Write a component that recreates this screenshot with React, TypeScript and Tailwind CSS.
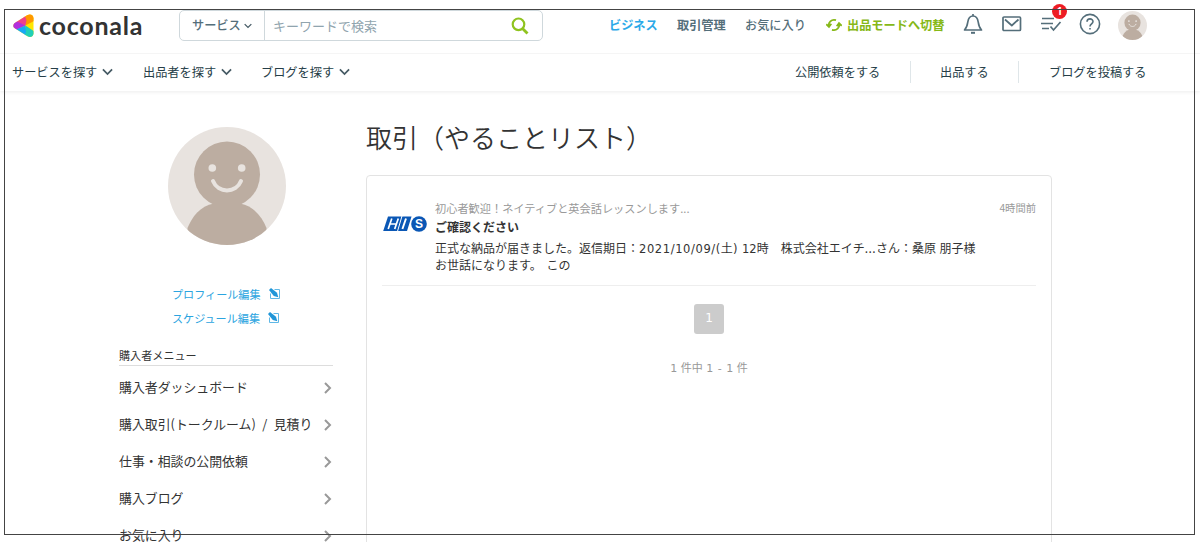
import React from 'react';

interface TextProps {
  children: React.ReactNode;
  className?: string;
}

interface IconProps {
  className?: string;
}

const menuItems = [
  '購入者ダッシュボード',
  '購入取引(トークルーム) / 見積り',
  '仕事・相談の公開依頼',
  '購入ブログ',
  'お気に入り',
];

const LogoMark: React.FC = () => (
  <svg viewBox="0 0 22 24" className="h-6 w-[22px] shrink-0">
    <defs>
      <clipPath id="mark">
        <path d="M1.800 9L14.500 1C17.500 -.5 20.500 1 20.500 4.200V19.200C20.500 22.500 17.500 24 14.500 22.300L1.800 14.200C-.2 12.900 -.2 10.400 1.800 9Z" />
      </clipPath>
    </defs>
    <g clipPath="url(#mark)">
      <path d="M0 0H22V24H0Z" fill="#ffe600" />
      <path d="M12 -2H23V6L12.500 11.500L11 2Z" fill="#ff9800" />
      <path d="M2 8L11 0L13.500 6L12.500 11.500L7 10Z" fill="#ee3f8e" />
      <path d="M-1 6L4 7.500L12.500 11.500L4 15.500L-1 17Z" fill="#b32fdc" />
      <path d="M3 15.500L12.500 11.500L13.500 18L12 24Z" fill="#18a8f5" />
      <path d="M12.500 11.500L22 18V25H10L13 18Z" fill="#20cfb8" />
    </g>
  </svg>
);

const ChevronDown: React.FC<IconProps> = ({ className }) => (
  <svg viewBox="0 0 12 8" fill="none" stroke="#455a64" strokeWidth="1.900" className={className}>
    <path d="M1 1.200L6 6.200L11 1.200" />
  </svg>
);

const Avatar: React.FC<IconProps> = ({ className }) => (
  <svg viewBox="0 0 118 118" className={className}>
    <clipPath id="face">
      <circle cx="59" cy="59" r="59" />
    </clipPath>
    <circle cx="59" cy="59" r="59" fill="#e8e3df" />
    <g clipPath="url(#face)">
      <circle cx="59" cy="47.500" r="33" fill="#bcada1" />
      <path d="M46 76.500H72C86 79 94 90 98.500 101V118H19.500V101C24 90 32 79 46 76.500Z" fill="#bcada1" />
    </g>
    <circle cx="44.300" cy="41" r="3.800" fill="#e8e3df" />
    <circle cx="73.700" cy="41" r="3.800" fill="#e8e3df" />
    <path d="M45 54C50 66.500 68 66.500 73 54" fill="none" stroke="#e8e3df" strokeWidth="4" strokeLinecap="round" />
  </svg>
);

const EditIcon: React.FC = () => (
  <svg viewBox="0 0 12 12" className="ml-[8px] h-3 w-3">
    <path d="M5.500 1.500H10.500V10.500H1.500V5.500" fill="none" stroke="#5fb8e6" />
    <path d="M0 2L2 0L8 4.800L9.300 9.300L4.800 8Z" fill="#2196d8" />
  </svg>
);

const CompanyLogo: React.FC = () => (
  <svg viewBox="0 0 44 16" className="h-4 w-11">
    <path d="M5 .5H28.500L24 15H.2Z" fill="#0a57b5" />
    <g fill="none" stroke="#fff">
      <path d="M8.800 2.500L5.200 13M15.300 2.500L11.700 13M7 8H13.500" strokeWidth="1.700" />
      <path d="M19 0L14.300 16" strokeWidth="1" />
      <path d="M23 2.500L19.400 13" strokeWidth="1.900" />
    </g>
    <circle cx="36" cy="8" r="7.800" fill="#0a57b5" />
    <text x="36" y="12.200" textAnchor="middle" fontFamily="Liberation Sans" fontWeight="bold" fontSize="12" fill="#fff">S</text>
  </svg>
);

const NavLink: React.FC<TextProps> = ({ children, className }) => (
  <a className={`text-[12.2px] ${className ?? ''}`}>{children}</a>
);

const SubLink: React.FC<TextProps> = ({ children, className }) => (
  <a className={`flex items-center gap-[5px] text-[12.2px] ${className ?? ''}`}>{children}</a>
);

const Header: React.FC = () => (
  <header className="h-[91px] text-[#546e7a] shadow-[0_1px_4px_rgba(0,0,0,0.08)]">
    <div className="flex h-[54px] items-start border-b border-[#f5f5f5] pl-[13px]">
      <div className="mt-[14px] flex items-center">
        <LogoMark />
        <span className="mb-[3px] ml-[4px] w-[111px] font-['Lato'] text-[25px] font-bold leading-[20px] tracking-[0.750px] text-[#333]">
          coconala
        </span>
      </div>
      <div className="ml-[29px] mt-[10px] flex h-[31px] w-[364px] items-center rounded-[5px] border border-[#cfd8dc]">
        <div className="flex h-full w-[85px] items-center border-r border-[#cfd8dc] pl-[12px]">
          <span className="text-[12.2px] font-medium">サービス</span>
          <ChevronDown className="ml-[3px] h-[6px] w-[8px]" />
        </div>
        <span className="pl-[8px] text-[13px] text-[#90a4ae]">キーワードで検索</span>
        <svg viewBox="0 0 18 18" fill="none" stroke="#8fc31f" strokeWidth="2.200" className="ml-auto mr-[13px] h-[18px] w-[18px]">
          <circle cx="7.500" cy="7.300" r="5.800" />
          <path d="M11.500 11.500L16.500 16.500" strokeWidth="2.800" />
        </svg>
      </div>
      <nav className="ml-[66px] mt-[10px] flex h-[30px] items-center">
        <NavLink className="w-[68px] font-bold text-[#2ba9e8]">ビジネス</NavLink>
        <NavLink className="w-[68px] font-bold">取引管理</NavLink>
        <NavLink className="w-[81px] font-medium">お気に入り</NavLink>
        <svg viewBox="0 0 16 14" fill="none" stroke="#86b817" strokeWidth="1.800" className="h-[14px] w-4">
          <path d="M3 8.500C1.800 4.500 5.500 .8 10 2.200M0.300 6.200L3 8.800L5.300 5.800" />
          <path d="M13 5.500C14.200 9.500 10.500 13.200 6 11.800M10.700 8.200L13 5.200L15.700 7.800" />
        </svg>
        <NavLink className="ml-[5px] w-[116px] font-bold text-[#86b817]">出品モードへ切替</NavLink>
      </nav>
      <div className="mt-[11px] flex h-[29px] items-center">
        <svg viewBox="0 0 20 22" fill="none" stroke="#546e7a" strokeWidth="1.700" strokeLinejoin="round" className="mb-[3px] h-[22px] w-5">
          <path d="M10 1V3M1.500 17H18.500C16.500 15 15.700 12.500 15.200 9C14.700 5.500 13.500 3 10 3C6.500 3 5.300 5.500 4.800 9C4.300 12.500 3.500 15 1.500 17Z" />
          <path d="M8 19.800H12" strokeWidth="2" />
        </svg>
        <svg viewBox="0 0 20 16" fill="none" stroke="#546e7a" strokeWidth="1.700" strokeLinejoin="round" className="mb-[3px] ml-[19px] h-4 w-5">
          <rect x="1" y="1" width="17.500" height="13.500" rx="1" />
          <path d="M3 3.500L9.800 9.500L16.500 3.500" />
        </svg>
        <div className="relative mb-[3px] ml-[18px]">
          <svg viewBox="0 0 22 18" fill="none" stroke="#546e7a" strokeWidth="1.700" className="h-[18px] w-[22px]">
            <path d="M2 3.500H14M1 8.500H13M2 13.500H9M10.500 11.500L13.500 15L20.500 7" />
          </svg>
          <span className="absolute -top-[11px] left-[12px] flex h-[15px] w-[15px] items-center justify-center rounded-full bg-[#ed1c24] font-['Noto_Sans'] text-[10px] font-bold text-white">
            1
          </span>
        </div>
        <svg viewBox="0 0 22 22" fill="none" stroke="#546e7a" strokeWidth="1.600" className="mb-[3px] ml-[17px] h-[22px] w-[22px]">
          <circle cx="11" cy="11" r="9.600" />
          <path d="M8 8.800C8 4.800 14 5 14 8.500C14 10.800 11 10.800 11 13.500M11 15V16.500" />
        </svg>
        <Avatar className="ml-[17px] h-[29px] w-[29px]" />
      </div>
    </div>
    <div className="flex h-[36px] items-center pl-[12px] text-[#263e48]">
      <SubLink className="w-[131px]">
        サービスを探す
        <ChevronDown className="h-[8px] w-[11px]" />
      </SubLink>
      <SubLink className="w-[118px]">
        出品者を探す
        <ChevronDown className="h-[8px] w-[11px]" />
      </SubLink>
      <SubLink className="w-[534px]">
        ブログを探す
        <ChevronDown className="h-[8px] w-[11px]" />
      </SubLink>
      <SubLink className="w-[115px]">公開依頼をする</SubLink>
      <SubLink className="h-[22px] w-[108px] border-l border-[#dfe6e9] pl-[29px]">出品する</SubLink>
      <SubLink className="h-[22px] border-l border-[#dfe6e9] pl-[30px]">ブログを投稿する</SubLink>
    </div>
  </header>
);

const Sidebar: React.FC = () => (
  <aside className="ml-[119px] w-[214px] shrink-0 pt-[36px]">
    <Avatar className="ml-[49px] h-[118px] w-[118px]" />
    <div className="ml-[53px] mt-[37px] text-[11.1px] leading-6 text-[#2ba4e0]">
      <a className="flex items-center">プロフィール編集<EditIcon /></a>
      <a className="flex items-center">スケジュール編集<EditIcon /></a>
    </div>
    <h2 className="mt-[15px] h-[21px] border-b border-[#ddd] text-[11.1px] leading-[20px]">購入者メニュー</h2>
    <ul className="mt-[3px]">
      {menuItems.map((item) => (
        <li key={item} className="flex h-[37px] items-center justify-between whitespace-nowrap pr-[1px] text-[12.9px]">
          <span className="pb-[2px] [word-spacing:3.500px]">{item}</span>
          <svg viewBox="0 0 8 12" fill="none" stroke="#999" strokeWidth="2" className="h-3 w-2">
            <path d="M1 1L6 6L1 11" />
          </svg>
        </li>
      ))}
    </ul>
  </aside>
);

const TodoList: React.FC = () => (
  <main className="ml-[33px] w-[686px] pt-[27px]">
    <h1 className="text-[26px] font-[350] leading-[38px]">取引（やることリスト）</h1>
    <section className="mt-[19px] h-[420px] rounded-[4px] border border-[#e3e3e3] px-[15px] pt-[24px]">
      <div className="flex h-[86px] border-b border-[#eee]">
        <div className="mt-[16px] w-[53px] shrink-0 pl-[1px]">
          <CompanyLogo />
        </div>
        <div className="flex-1 whitespace-nowrap text-[12px] leading-[17px]">
          <p className="text-[11.2px] text-[#999]">初心者歓迎！ネイティブと英会話レッスンします...</p>
          <p className="mt-[1px] font-bold">ご確認ください</p>
          <p className="mt-[4px] h-[17px] [word-spacing:1px]">
            正式な納品が届きました。返信期日：<span className="font-['DejaVu_Sans'] text-[11.5px] leading-none tracking-[0.600px]">2021/10/09/(</span>土
            <span className="font-['DejaVu_Sans'] text-[11.5px] leading-none">) 12</span>時　株式会社エイチ<span className="tracking-[0.400px]">...</span>さん：桑原 朋子様
          </p>
          <p className="[word-spacing:2px]">お世話になります。 この</p>
        </div>
        <time className="text-[10.300px] leading-4 text-[#999]">4時間前</time>
      </div>
      <div className="mx-auto mt-[18px] flex h-[30px] w-[30px] items-center justify-center rounded-[3px] bg-[#ccc] pb-[2px] font-['DejaVu_Sans'] text-[12px] text-white">
        1
      </div>
      <p className="mt-[24px] text-center text-[11px] leading-[18px] text-[#999] [word-spacing:1px]">
        <span className="font-['DejaVu_Sans']">1</span> 件中 <span className="font-['DejaVu_Sans']">1 - 1</span> 件
      </p>
    </section>
  </main>
);

const App: React.FC = () => {
  return (
    <div className="relative h-[542px] w-[1200px] overflow-hidden bg-white font-['Noto_Sans_CJK_JP',sans-serif] text-[#333]">
      <Header />
      <div className="flex">
        <Sidebar />
        <TodoList />
      </div>
      <div className="pointer-events-none absolute left-[4px] top-[9px] h-[526px] w-[1191px] border border-[#444]" />
    </div>
  );
};

export default App;
